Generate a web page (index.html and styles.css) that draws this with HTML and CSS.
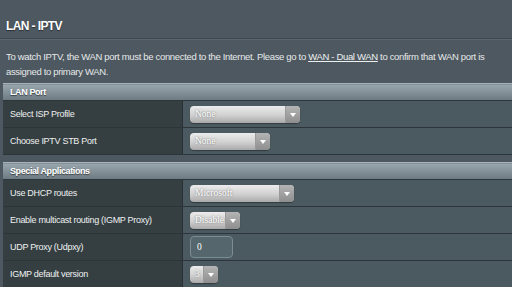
FILE: index.html
```html
<!DOCTYPE html>
<html lang="en">

<head>
    <meta charset="UTF-8" />
    <title>LAN - IPTV</title>
    <link rel="stylesheet" href="styles.css">
</head>

<body>
    <h1 class="page-title">LAN - IPTV</h1>
    <div class="divider"></div>

    <p class="intro">
        To watch IPTV, the WAN port must be connected to the Internet. Please go to
        <a href="#">WAN - Dual WAN</a> to confirm that WAN port is assigned to primary WAN.
    </p>

    <table class="form-table">
        <thead>
            <tr><td colspan="2">LAN Port</td></tr>
        </thead>
        <tbody>
            <tr>
                <th>Select ISP Profile</th>
                <td>
                    <div class="select w-110"><span class="value">None</span><span class="arrow"></span></div>
                </td>
            </tr>
            <tr>
                <th>Choose IPTV STB Port</th>
                <td>
                    <div class="select w-80"><span class="value">None</span><span class="arrow"></span></div>
                </td>
            </tr>
        </tbody>
    </table>

    <table class="form-table">
        <thead>
            <tr><td colspan="2">Special Applications</td></tr>
        </thead>
        <tbody>
            <tr>
                <th>Use DHCP routes</th>
                <td>
                    <div class="select w-104"><span class="value">Microsoft</span><span class="arrow"></span></div>
                </td>
            </tr>
            <tr>
                <th>Enable multicast routing (IGMP Proxy)</th>
                <td>
                    <div class="select w-50"><span class="value">Disable</span><span class="arrow"></span></div>
                </td>
            </tr>
            <tr>
                <th>UDP Proxy (Udpxy)</th>
                <td>
                    <input class="text-input" type="text" value="0" />
                </td>
            </tr>
            <tr>
                <th>IGMP default version</th>
                <td>
                    <div class="select w-28"><span class="value">3</span><span class="arrow"></span></div>
                </td>
            </tr>
        </tbody>
    </table>
</body>

</html>
```

FILE: styles.css
```css
body {
    margin: 0;
    background: #4d5860;
    color: #eef0f0;
    font-family: "Liberation Sans", Arial, sans-serif;
    font-size: 9px;
    letter-spacing: -0.3px;
    overflow: hidden;
}

.page-title {
    margin: 0;
    padding: 19px 6px 0;
    height: 19px;
    font-size: 12px;
    letter-spacing: -0.6px;
    font-weight: bold;
    color: #fff;
    text-shadow: 0 1px 1px rgba(0, 0, 0, 0.5);
}

.divider {
    height: 1px;
    background: #3e484e;
    border-bottom: 1px solid #5c666d;
}

.intro {
    margin: 0;
    padding: 9px 6px 0;
    width: 500px;
    height: 34px;
    font-size: 9.5px;
    letter-spacing: -0.33px;
    line-height: 15px;
    color: #e6e8e9;
}

.intro a {
    color: #eef0f0;
}

.form-table {
    width: 540px;
    margin-left: 3px;
    margin-bottom: 7px;
    border-collapse: collapse;
}

.form-table thead td {
    height: 16px;
    padding: 0 0 0 7px;
    background: linear-gradient(#9aa6ad, #6d7980);
    border-top: 1px solid #a8b3b9;
    border-bottom: 1px solid #2d373b;
    font-weight: bold;
    letter-spacing: -0.4px;
    color: #fff;
    text-shadow: 0 1px 1px rgba(0, 0, 0, 0.55);
}

.form-table th,
.form-table tbody td {
    height: 26px;
    border-bottom: 1px solid #2c3539;
    padding: 0;
}

.form-table th {
    width: 172px;
    padding-left: 7px;
    text-align: left;
    font-weight: normal;
    background: #353f42;
    border-right: 1px solid #283033;
    color: #eef0f0;
}

.form-table tbody td {
    background: #4b5a60;
    padding-left: 7px;
}

.select {
    display: flex;
    height: 17px;
    border-radius: 4px;
    overflow: hidden;
    background: linear-gradient(#ececec, #d0d0d0 55%, #a9a9a9);
    box-shadow: 0 1px 1px rgba(0, 0, 0, 0.35);
    font-family: "Liberation Serif", "Times New Roman", serif;
    font-size: 9.5px;
    letter-spacing: 0;
    line-height: 17px;
}

.select .value {
    flex: 1;
    padding-left: 5px;
    color: #fff;
    text-shadow: 0 0 2px rgba(0, 0, 0, 0.55);
}

.select .arrow {
    position: relative;
    width: 14px;
    background: linear-gradient(#b4b4b4, #8e8e8e);
    border-left: 1px solid #9a9a9a;
}

.select .arrow::after {
    content: "";
    position: absolute;
    left: 4px;
    top: 7px;
    border-left: 3px solid transparent;
    border-right: 3px solid transparent;
    border-top: 4px solid #fff;
}

.w-110 { width: 110px; }
.w-104 { width: 104px; }
.w-80 { width: 80px; }
.w-50 { width: 50px; }
.w-28 { width: 28px; }

.text-input {
    box-sizing: border-box;
    width: 43px;
    height: 22px;
    padding: 0 6px;
    background: #55666d;
    border: 1px solid #7b8c94;
    border-radius: 4px;
    color: #fff;
    font-family: "Liberation Serif", "Times New Roman", serif;
    font-size: 9.5px;
    outline: none;
}
```
